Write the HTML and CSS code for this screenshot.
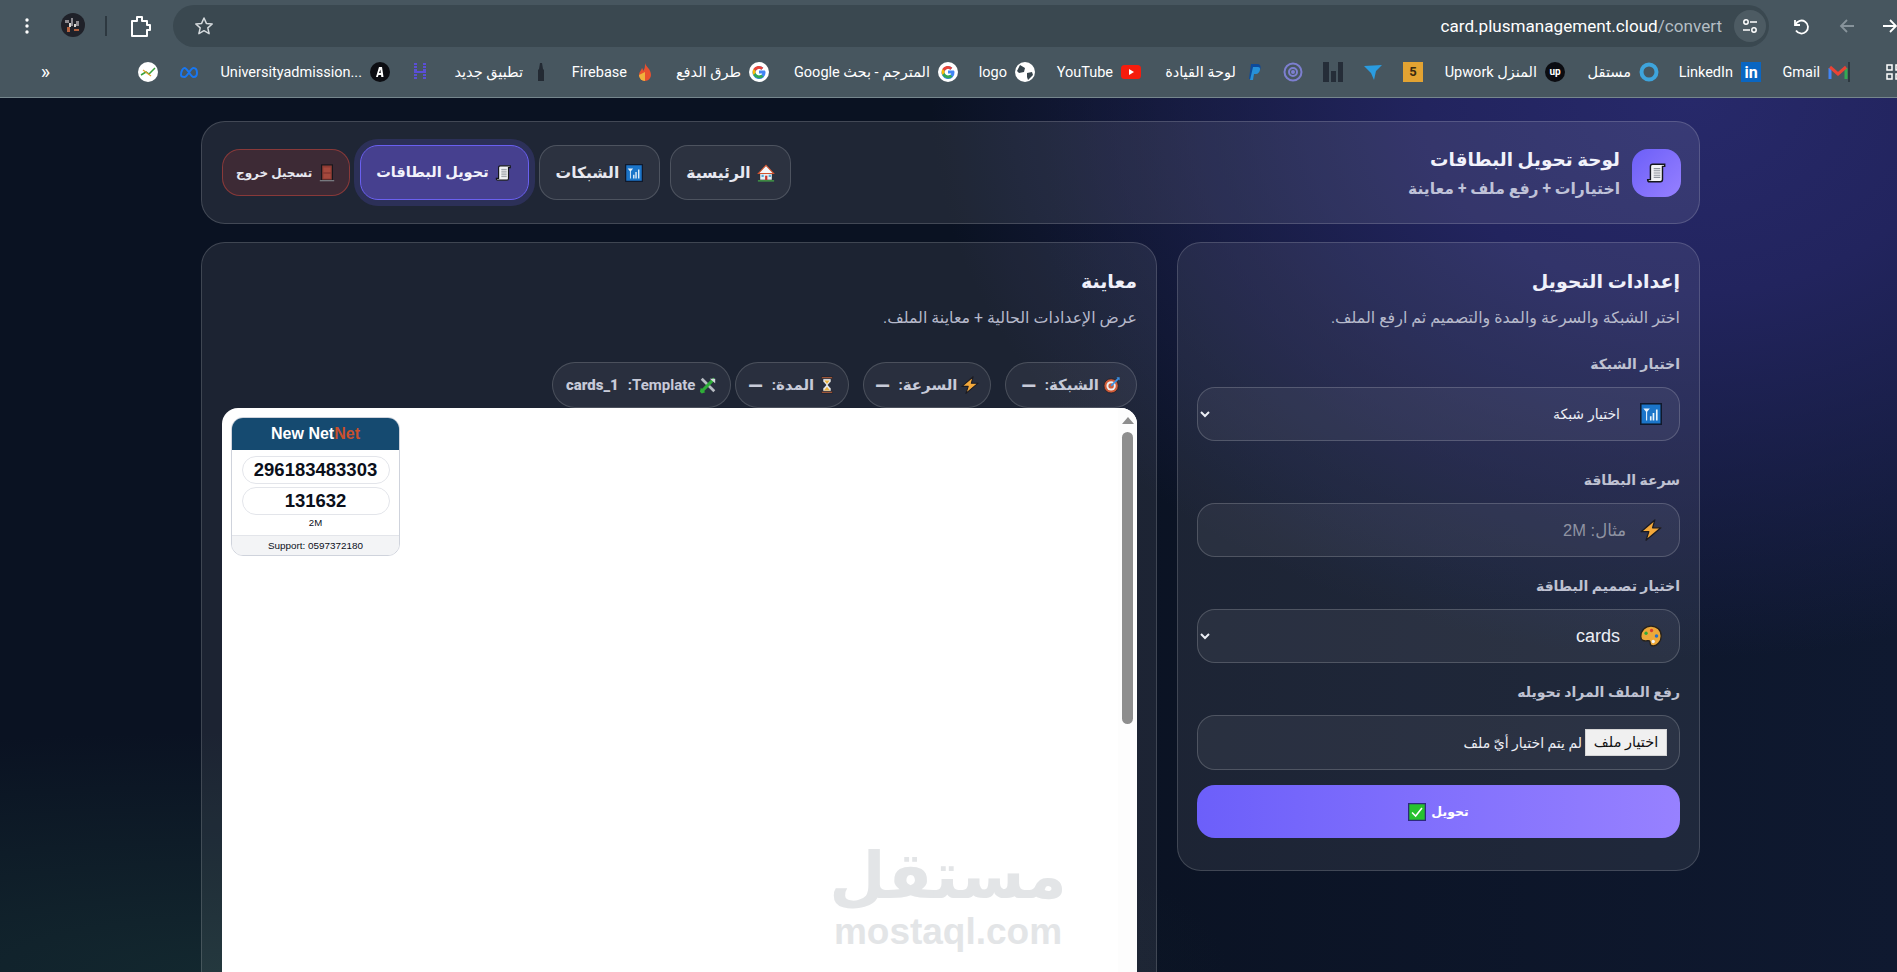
FILE: index.html
```html
<!DOCTYPE html>
<html lang="ar">
<head>
    <meta charset="UTF-8">
    <meta name="viewport" content="width=device-width, initial-scale=1.0">
    <title>لوحة تحويل البطاقات</title>
    <link rel="stylesheet" href="styles.css">
</head>
<body>
    <!-- shared emoji drawings -->
    <svg class="sprites" aria-hidden="true">
        <symbol id="e-scroll" viewBox="0 0 20 20">
            <path d="M6 2h11v2h-2v12q0 2-2 2H3q-1.500 0-1.500-2H4V4q0-2 2-2z" fill="#f2f3f5" stroke="#15171c" stroke-width="1.300"/>
            <path d="M7 6h6M7 8h6M7 10h6M7 12h6M7 14h6" stroke="#8f949c" stroke-width="1"/>
        </symbol>
        <symbol id="e-signal" viewBox="0 0 20 20">
            <rect x=".7" y=".7" width="18.600" height="18.600" fill="#1b75c9" stroke="#10192c" stroke-width="1.400"/>
            <path d="M3 5h6L6.500 8v8h-1V8z" fill="#e9f3fb"/>
            <path d="M9 12h1.500v4H9zM11.500 9H13v7h-1.500zM14.500 6H16v10h-1.500z" fill="#e9f3fb"/>
        </symbol>
        <symbol id="e-house" viewBox="0 0 20 20">
            <path d="M3 10h14v8H3z" fill="#e8eef2" stroke="#1b1d22"/>
            <path d="M10 1.500 1.500 10.500h17z" fill="#f4f6f8" stroke="#d2522c" stroke-width="1.200"/>
            <path d="M9 13h2.500v5H9z" fill="#c9352b"/>
            <path d="M5 12h2.500v2.500H5zM13 12h2.500v2.500H13z" fill="#57a9dc"/>
            <path d="M1 18h18v1.500H1z" fill="#43a047"/>
        </symbol>
        <symbol id="e-door" viewBox="0 0 20 20">
            <rect x="4" y="1" width="12" height="17" fill="#8e3b33" stroke="#17181d" stroke-width="1.300"/>
            <path d="M6 4h8v5H6zM6 11h8v5H6z" fill="#a5493d"/>
            <path d="M2 18.500h16" stroke="#77797f" stroke-width="1.500"/>
        </symbol>
        <symbol id="e-bolt" viewBox="0 0 20 20">
            <path d="M13.500.8 1 11.500h7L5.500 19.300 19 8h-7.500z" fill="#f4a93b" stroke="#1b1b22" stroke-width="1.200" stroke-linejoin="round"/>
        </symbol>
        <symbol id="e-palette" viewBox="0 0 20 20">
            <path d="M10 1c5.500 0 9.300 3.600 9.300 9 0 5-3.700 9-7.300 9-2 0-2.800-1.200-2.800-2.700 0-2-1.200-2.300-2.700-2-2.500.5-5.800 0-5.800-3.800C.7 4.800 4.800 1 10 1z" fill="#eda839" stroke="#26211b" stroke-width="1.200"/>
            <circle cx="5.500" cy="7.500" r="1.500" fill="#2faa3c"/>
            <circle cx="10.500" cy="5" r="1.500" fill="#d8402f"/>
            <circle cx="15" cy="10" r="1.600" fill="#2770c9"/>
            <circle cx="12" cy="15" r="1.500" fill="#f4f4f4"/>
        </symbol>
        <symbol id="e-check" viewBox="0 0 20 20">
            <rect x=".7" y=".7" width="18.600" height="18.600" fill="#27c22f" stroke="#2c2a7c" stroke-width="1.400"/>
            <path d="M4.500 10.500 8.500 14.500 15.500 5.500" fill="none" stroke="#fff" stroke-width="1.700"/>
        </symbol>
        <symbol id="e-target" viewBox="0 0 20 20">
            <circle cx="9" cy="11" r="8" fill="#cf5a37" stroke="#20222d"/>
            <circle cx="9" cy="11" r="5.200" fill="#eceff2"/>
            <circle cx="9" cy="11" r="3" fill="#cf5a37"/>
            <path d="M9 11 17 3" stroke="#3b8fe0" stroke-width="2"/>
            <path d="M15 1.500h3.500V5z" fill="#3b8fe0"/>
        </symbol>
        <symbol id="e-hourglass" viewBox="0 0 20 20">
            <path d="M4 1h12v2H4zM4 17h12v2H4z" fill="#c9683f" stroke="#1b1d24" stroke-width=".7"/>
            <path d="M5.500 3h9v3L11 10l3.500 4v3h-9v-3L9 10 5.500 6z" fill="#eceef2" stroke="#1b1d24" stroke-width=".7"/>
            <path d="M7 5h6l-3 4zM6.500 16 10 12l3.500 4z" fill="#eab23e"/>
        </symbol>
        <symbol id="e-tools" viewBox="0 0 20 20">
            <path d="M3 3 17 17" stroke="#b7bcc3" stroke-width="3"/>
            <path d="M17 3 3 17" stroke="#2fae38" stroke-width="3.400"/>
            <path d="M12 3h6v5z" fill="#d4d8dd"/>
            <path d="M2 13l5 5-4 1.500-2-2z" fill="#2fae38"/>
        </symbol>
        <symbol id="i-g" viewBox="0 0 20 20">
            <circle cx="10" cy="10" r="10" fill="#fff"/>
            <path d="M15.800 8.500H10v3h3.300a3.500 3.500 0 1 1-1-3.800l2-2A6.500 6.500 0 1 0 16.500 10q0-.8-.7-1.500z" fill="#4285f4"/>
            <path d="M4.300 7a6.500 6.500 0 0 1 10-1.300l-2 2A3.500 3.500 0 0 0 6.700 9z" fill="#ea4335"/>
            <path d="M3.600 10q0-1.600.7-3l2.400 2q-.3 1 0 2l-2.400 2q-.7-1.400-.7-3z" fill="#fbbc05"/>
            <path d="M4.300 13l2.400-2a3.500 3.500 0 0 0 5.600 1.700l2.300 1.800A6.500 6.500 0 0 1 4.300 13z" fill="#34a853"/>
        </symbol>
    </svg>

    <!-- browser toolbar -->
    <header class="browser">
        <div class="toolbar">
            <svg class="tb-dots" width="4" height="16" viewBox="0 0 4 16"><circle cx="2" cy="2" r="1.700"/><circle cx="2" cy="8" r="1.700"/><circle cx="2" cy="14" r="1.700"/></svg>
            <svg class="tb-avatar" width="24" height="24" viewBox="0 0 24 24"><circle cx="12" cy="12" r="12" fill="#1f2129"/><path d="M4 7h4v3H4zM10 5h2v8h-2zM15 8h3v5h-3z" fill="#8c8a90"/><path d="M6 14h3v5H6zM13 16h5v2h-5z" fill="#b5623f"/><path d="M8 10h2v4H8zM13 11h2v3h-2z" fill="#d8d6d2"/></svg>
            <span class="tb-divider"></span>
            <svg class="tb-ext" width="22" height="24" viewBox="0 0 22 24" fill="none" stroke="#fff" stroke-width="2"><path d="M2 7h5V3h5v4h5v4h3v5h-3v6H2z" stroke-linejoin="round"/></svg>
            <div class="omnibox">
                <svg class="star" width="20" height="20" viewBox="0 0 20 20" fill="none" stroke="#d5dadd" stroke-width="1.500"><path d="M10 2l2.400 5.400 5.800.6-4.400 3.900 1.300 5.800L10 14.700l-5.100 3 1.300-5.800L1.800 8l5.800-.6z" stroke-linejoin="round"/></svg>
                <span class="url">card.plusmanagement.cloud<span class="url-path">/convert</span></span>
                <span class="site-btn">
                    <svg width="16" height="16" viewBox="0 0 16 16" fill="none" stroke="#fff" stroke-width="1.500"><path d="M8 4h7M1 12h7"/><circle cx="4" cy="4" r="2.200"/><circle cx="12" cy="12" r="2.200"/></svg>
                </span>
            </div>
            <svg class="tb-reload" width="20" height="20" viewBox="0 0 20 20" fill="none" stroke="#fff" stroke-width="1.800"><path d="M4 4v5h5"/><path d="M4.500 8.500A6.500 6.500 0 1 1 5 14.500"/></svg>
            <svg class="tb-back" width="18" height="18" viewBox="0 0 18 18" fill="none" stroke="#87939b" stroke-width="1.800"><path d="M16 9H3M9 3 3 9l6 6"/></svg>
            <svg class="tb-forward" width="18" height="18" viewBox="0 0 18 18" fill="none" stroke="#fff" stroke-width="1.800"><path d="M2 9h13M9 3l6 6-6 6"/></svg>
        </div>
        <nav class="bookmarks">
            <span class="bm bm-more">»</span>
            <span class="bm"><svg class="fav" viewBox="0 0 20 20"><circle cx="10" cy="10" r="10" fill="#fff"/><path d="M3 13 8 10l3 2 6-6" fill="none" stroke="#3aa23a" stroke-width="1.500"/><path d="M5 8l8 6" stroke="#e0a12c" stroke-width="1.200"/></svg></span>
            <span class="bm"><svg class="fav" viewBox="0 0 20 20" fill="none" stroke="#1877f2" stroke-width="2"><path d="M2 13c0-4 2-7 3.500-7 3 0 6 9 9 9C17 15 18 13 18 11c0-3-1.500-5-3.500-5-3 0-6 9-9 9C3 15 2 14 2 13z"/></svg></span>
            <span class="bm">Universityadmission...<svg class="fav" viewBox="0 0 20 20"><circle cx="10" cy="10" r="10" fill="#0c0d12"/><path d="M6 15 9 5h3l1.500 10h-2.200l-.2-2H8.500l-.6 2zM9 11h1.800l-.4-3.500z" fill="#fff"/></svg></span>
            <span class="bm"><svg class="fav" viewBox="0 0 20 20" fill="#5a4fd6"><path d="M4 1h3v2H4zM13 1h3v2h-3zM4 4h3v2H4zM13 4h3v2h-3zM4 7h3v2H4zM13 7h3v2h-3zM4 9h12v2H4zM4 12h3v2H4zM13 12h3v2h-3zM4 15h3v2H4zM13 15h3v2h-3z"/></svg></span>
            <span class="bm">تطبيق جديد<svg class="fav" viewBox="0 0 20 20" fill="#232a33"><path d="M9 1h2l1 6 1 1v11H7V8l1-1z"/></svg></span>
            <span class="bm">Firebase<svg class="fav" viewBox="0 0 20 20"><path d="M10 1c1 4 6 6 6 12a6 6 0 0 1-12 0c0-3 2-4 3-7 1 1 1 2 1 3 2-2 2-5 2-8z" fill="#e8502f"/><path d="M4 13a6 6 0 0 0 6 6V10z" fill="#f0b13c"/></svg></span>
            <span class="bm">طرق الدفع<svg class="fav"><use href="#i-g"/></svg></span>
            <span class="bm"><span dir="rtl">المترجم - بحث Google</span><svg class="fav"><use href="#i-g"/></svg></span>
            <span class="bm">logo<svg class="fav" viewBox="0 0 20 20"><circle cx="10" cy="10" r="10" fill="#fff"/><path d="M5 3l5 3-1 4-5 1-2-2zM12 11l5-1 1 3-5 5-1-3z" fill="#37444c"/></svg></span>
            <span class="bm">YouTube<svg class="fav" viewBox="0 0 20 20"><rect y="3" width="20" height="14" rx="3.500" fill="#f61c0d"/><path d="M8 7l5 3-5 3z" fill="#fff"/></svg></span>
            <span class="bm">لوحة القيادة<svg class="fav" viewBox="0 0 20 20"><path d="M7 2h6c3 0 4 2 3.500 4.500S14 10 12 10h-2l-1 7H5z" fill="#0d4a9a"/><path d="M9 5h5c1.500 0 2.500 1 2 3s-2 4-4 4h-2l-1 6H6z" fill="#2790d8"/></svg></span>
            <span class="bm"><svg class="fav" viewBox="0 0 20 20" fill="none" stroke="#7d7fd0" stroke-width="2"><circle cx="10" cy="10" r="8.500"/><circle cx="10" cy="10" r="4"/><circle cx="10" cy="10" r="1" fill="#7d7fd0"/></svg></span>
            <span class="bm"><svg class="fav" viewBox="0 0 20 20" fill="#252d38"><path d="M0 0h6v20H0zM8 9h5v11H8zM15 0h5v20h-5z"/></svg></span>
            <span class="bm"><svg class="fav" viewBox="0 0 20 20" fill="#2a9ce0"><path d="M1 4l18-1-6 6-2 9-3-7z"/></svg></span>
            <span class="bm"><span class="fav fav-five">5</span></span>
            <span class="bm">Upwork المنزل<svg class="fav" viewBox="0 0 20 20"><circle cx="10" cy="10" r="10" fill="#0b0c11"/><text x="10" y="13" text-anchor="middle" class="fav-up">up</text></svg></span>
            <span class="bm">مستقل<svg class="fav" viewBox="0 0 20 20" fill="none" stroke="#3ea4dc" stroke-width="4"><circle cx="10" cy="10" r="7.500"/></svg></span>
            <span class="bm">LinkedIn<svg class="fav" viewBox="0 0 20 20"><rect width="20" height="20" fill="#0a66c2"/><text x="10" y="15.500" text-anchor="middle" class="fav-in">in</text></svg></span>
            <span class="bm">Gmail<svg class="fav" viewBox="0 0 20 20" fill="none" stroke-width="3"><path d="M2 17V6" stroke="#4285f4"/><path d="M18 17V6" stroke="#34a853"/><path d="M2 5l8 7 8-7" stroke="#ea4335"/></svg></span>
            <span class="bm bm-divider"></span>
            <span class="bm bm-grid"><svg width="16" height="16" viewBox="0 0 16 16" fill="none" stroke="#fff" stroke-width="1.500"><rect x="1" y="1" width="5" height="5"/><rect x="1" y="10" width="5" height="5"/><rect x="10" y="1" width="5" height="5"/><rect x="10" y="10" width="5" height="5"/></svg></span>
        </nav>
    </header>

    <main class="page" dir="rtl">
        <div class="topbar">
            <div class="brand">
                <div class="brand-icon"><svg class="emoji-lg"><use href="#e-scroll"/></svg></div>
                <div>
                    <h1>لوحة تحويل البطاقات</h1>
                    <p>اختيارات + رفع ملف + معاينة</p>
                </div>
            </div>
            <nav class="nav">
                <a class="nav-btn"><svg class="emoji"><use href="#e-house"/></svg>الرئيسية</a>
                <a class="nav-btn nav-net"><svg class="emoji"><use href="#e-signal"/></svg>الشبكات</a>
                <a class="nav-btn active"><svg class="emoji"><use href="#e-scroll"/></svg>تحويل البطاقات</a>
                <a class="nav-btn logout"><svg class="emoji"><use href="#e-door"/></svg>تسجيل خروج</a>
            </nav>
        </div>

        <div class="columns">
            <section class="panel">
                <h2>إعدادات التحويل</h2>
                <p class="sub">اختر الشبكة والسرعة والمدة والتصميم ثم ارفع الملف.</p>

                <div class="group group-first">
                    <label>اختيار الشبكة</label>
                    <div class="field">
                        <svg class="field-icon"><use href="#e-signal"/></svg>
                        <select class="control select-ar"><option>اختيار شبكة</option></select>
                    </div>
                </div>
                <div class="group">
                    <label>سرعة البطاقة</label>
                    <div class="field">
                        <svg class="field-icon"><use href="#e-bolt"/></svg>
                        <input class="control" type="text" placeholder="مثال: 2M">
                    </div>
                </div>
                <div class="group">
                    <label>اختيار تصميم البطاقة</label>
                    <div class="field">
                        <svg class="field-icon"><use href="#e-palette"/></svg>
                        <select class="control control-lat"><option>cards</option></select>
                    </div>
                </div>
                <div class="group group-last">
                    <label>رفع الملف المراد تحويله</label>
                    <div class="file-box">
                        <button class="file-btn" type="button">اختيار ملف</button>
                        <span>لم يتم اختيار أيّ ملف</span>
                    </div>
                </div>
                <button class="submit" type="button">تحويل<svg class="emoji"><use href="#e-check"/></svg></button>
            </section>

            <section class="panel panel-preview">
                <h2>معاينة</h2>
                <p class="sub">عرض الإعدادات الحالية + معاينة الملف.</p>
                <div class="chips">
                    <span class="chip chip-net"><svg class="emoji"><use href="#e-target"/></svg>الشبكة: <b class="dash">—</b></span>
                    <span class="chip chip-speed"><svg class="emoji"><use href="#e-bolt"/></svg>السرعة: <b class="dash">—</b></span>
                    <span class="chip chip-time"><svg class="emoji"><use href="#e-hourglass"/></svg>المدة: <b class="dash">—</b></span>
                    <span class="chip chip-template"><svg class="emoji"><use href="#e-tools"/></svg><span>Template:</span><b>cards_1</b></span>
                </div>
                <div class="preview" dir="ltr">
                    <div class="preview-body">
                        <div class="card">
                            <div class="card-head">New Net<span>Net</span></div>
                            <div class="card-pill">296183483303</div>
                            <div class="card-pill">131632</div>
                            <div class="card-speed">2M</div>
                            <div class="card-foot">Support: 0597372180</div>
                        </div>
                    </div>
                    <div class="scrollbar">
                        <span class="scroll-up"></span>
                        <span class="scroll-thumb"></span>
                    </div>
                </div>
            </section>
        </div>

        <div class="watermark" dir="rtl">
            <span class="wm-ar">مستقل</span>
            <span class="wm-en">mostaql.com</span>
        </div>
    </main>
</body>
</html>
```

FILE: styles.css
```css
* {
    margin: 0;
    padding: 0;
    box-sizing: border-box;
}

html, body {
    height: 972px;
    overflow: hidden;
}

body {
    font-family: Roboto, "DejaVu Sans", sans-serif;
    background: #0a1222;
}

.sprites {
    position: absolute;
    width: 0;
    height: 0;
}

/* browser toolbar */
.browser {
    height: 98px;
    background: #47565f;
    border-bottom: 1px solid #76868d;
    color: #fff;
    overflow: hidden;
}

.toolbar {
    height: 52px;
    padding-top: 5px;
    display: flex;
    align-items: flex-start;
}

.toolbar > * {
    flex-shrink: 0;
}

.tb-dots {
    margin: 13px 0 0 25px;
    fill: #fff;
}

.tb-avatar {
    margin: 8px 0 0 32px;
}

.tb-divider {
    width: 2px;
    height: 20px;
    margin: 11px 0 0 20px;
    background: #2d3840;
}

.tb-ext {
    margin: 9px 0 0 23px;
}

.omnibox {
    width: 1596px;
    height: 42px;
    margin-left: 21px;
    padding: 0 3px 0 21px;
    border-radius: 21px;
    background: #3a4850;
    display: flex;
    align-items: center;
}

.url {
    margin-left: auto;
    font-size: 17.100px;
}

.url-path {
    color: #b4bec4;
}

.site-btn {
    width: 32px;
    height: 32px;
    margin-left: 12px;
    border-radius: 50%;
    background: #4d5b63;
    display: flex;
    align-items: center;
    justify-content: center;
}

.tb-reload {
    margin: 11px 0 0 22px;
}

.tb-back {
    margin: 12px 0 0 27px;
}

.tb-forward {
    margin: 12px 0 0 25px;
}

.bookmarks {
    height: 45px;
    padding-bottom: 5px;
    display: grid;
    grid-template-columns: 50px 108px 41px 191px 40px 121px 104px 114px 189px 77px 106px 123px 39px 40px 40px 40px 142px 94px 102px 87px 9px 42px;
    align-items: center;
    font-size: 14.5px;
    white-space: nowrap;
}

.bm {
    justify-self: end;
    display: flex;
    align-items: center;
    gap: 8px;
}

.bm-more {
    font-size: 20px;
}

.bm-divider {
    width: 2px;
    height: 20px;
    background: #2d3840;
    justify-self: start;
}

.bm-grid {
    justify-self: start;
    margin-left: 29px;
}

.fav {
    width: 20px;
    height: 20px;
    flex-shrink: 0;
}

.fav-five {
    background: #e3a332;
    color: #3a2a10;
    font-size: 13px;
    font-weight: 700;
    text-align: center;
    line-height: 20px;
}

.fav-up {
    fill: #fff;
    font-size: 10px;
    font-weight: 700;
}

.fav-in {
    fill: #fff;
    font-size: 16px;
    font-weight: 700;
}

/* page */
.page {
    position: relative;
    height: 874px;
    padding: 23px 197px 0 201px;
    overflow: hidden;
    background:
        radial-gradient(760px 560px at 1690px 0, #27296a 0%, #22245e 35%, rgba(28, 30, 80, 0) 100%),
        radial-gradient(1000px 240px at 230px 100%, #13282f 0%, rgba(19, 40, 47, 0) 100%),
        linear-gradient(90deg, #0a1222 0%, #0a1222 55%, #0f1930 100%);
}

.topbar {
    height: 103px;
    padding: 0 18px 0 20px;
    display: flex;
    align-items: center;
    justify-content: space-between;
    border: 1px solid rgba(255, 255, 255, 0.16);
    border-radius: 24px;
    background: rgba(255, 255, 255, 0.085);
}

.brand {
    display: flex;
    align-items: center;
    gap: 12px;
}

.brand-icon {
    width: 49px;
    height: 48px;
    border-radius: 16px;
    background: linear-gradient(135deg, #6c5ff8, #9680ff);
    display: flex;
    align-items: center;
    justify-content: center;
}

.emoji-lg {
    width: 22px;
    height: 22px;
}

.brand h1 {
    font-size: 18.400px;
    line-height: 28px;
    font-weight: 700;
    color: #f1f2fb;
}

.brand p {
    margin-top: 5px;
    font-size: 15.600px;
    line-height: 20px;
    font-weight: 700;
    color: #bfc2d8;
}

.nav {
    display: flex;
    align-items: center;
    gap: 10px;
}

.nav-btn {
    height: 55px;
    padding: 0 15px;
    display: flex;
    align-items: center;
    gap: 6px;
    border: 1px solid rgba(255, 255, 255, 0.16);
    border-radius: 18px;
    background: rgba(255, 255, 255, 0.06);
    color: #e7e8f0;
    font-size: 15.500px;
    font-weight: 700;
}

.nav-btn.nav-net {
    padding: 0 16px;
}

.nav-btn.active {
    border-color: #6a60f0;
    background: #46408f;
    box-shadow: 0 0 0 6px rgba(108, 95, 248, 0.18);
    color: #f2f2fb;
    font-size: 14.500px;
}

.nav-btn.logout {
    height: 47px;
    padding: 0 13px;
    font-size: 12px;
    border-color: rgba(200, 70, 60, 0.55);
    background: #3d2a35;
}

.emoji {
    width: 18px;
    height: 18px;
    flex-shrink: 0;
}

.columns {
    margin-top: 18px;
    display: grid;
    grid-template-columns: 523px 1fr;
    gap: 20px;
    align-items: start;
}

.panel {
    padding: 25px 19px 32px;
    border: 1px solid rgba(255, 255, 255, 0.16);
    border-radius: 24px;
    background: rgba(255, 255, 255, 0.075);
}

.panel-preview {
    height: 900px;
}

.panel h2 {
    font-size: 19px;
    line-height: 28px;
    font-weight: 700;
    color: #eff0fa;
}

.sub {
    margin-top: 10px;
    font-size: 15.900px;
    line-height: 24px;
    color: #b6b9cb;
}

.group {
    margin-bottom: 19px;
}

.group-first {
    margin-top: 24px;
    margin-bottom: 29px;
}

.group-last {
    margin-bottom: 15px;
}

.group label {
    display: block;
    margin-bottom: 13px;
    font-size: 14px;
    line-height: 20px;
    font-weight: 700;
    color: #bfc2d2;
}

.field {
    position: relative;
}

.field-icon {
    position: absolute;
    top: 16px;
    right: 18px;
    width: 22px;
    height: 22px;
    pointer-events: none;
}

.control {
    width: 100%;
    height: 54px;
    padding: 0 53px 0 4px;
    border: 1px solid rgba(255, 255, 255, 0.18);
    border-radius: 18px;
    background-color: rgba(255, 255, 255, 0.055);
    color: #eceef5;
    font-family: "Liberation Sans", "DejaVu Sans", sans-serif;
    font-size: 16.500px;
    outline: none;
}

.select-ar {
    padding-right: 55px;
    font-size: 14px;
}

.control-lat {
    padding-right: 55px;
    font-size: 18px;
}

.control::placeholder {
    color: #8f93a2;
}

.file-box {
    height: 55px;
    padding: 0 12px;
    display: flex;
    align-items: center;
    border: 1px solid rgba(255, 255, 255, 0.18);
    border-radius: 18px;
    background: rgba(255, 255, 255, 0.055);
    color: #eceef5;
    font-size: 14px;
}

.file-btn {
    width: 82px;
    height: 27px;
    margin-left: 3px;
    border: 1px solid #d5d5d5;
    background: #f0f0f0;
    color: #111;
    font-family: inherit;
    font-size: 14.500px;
}

.submit {
    width: 100%;
    height: 53px;
    display: flex;
    align-items: center;
    justify-content: center;
    gap: 5px;
    border: 0;
    border-radius: 18px;
    background: linear-gradient(90deg, #6c5ffa, #9781ff);
    color: #fff;
    font-family: inherit;
    font-size: 12.500px;
    font-weight: 700;
}

.chips {
    margin-top: 32px;
    display: flex;
    gap: 14px;
}

.chip {
    height: 46px;
    padding: 0 13px;
    display: flex;
    align-items: center;
    gap: 4px;
    border: 1px solid rgba(255, 255, 255, 0.16);
    border-radius: 23px;
    background: rgba(255, 255, 255, 0.06);
    color: #c7cad8;
    font-size: 15px;
    font-weight: 700;
    white-space: nowrap;
}

.chip b {
    margin-right: 5px;
}

.chip .dash {
    font-size: 19px;
}

.chip-net {
    padding: 0 15px;
}

.chip-speed {
    padding: 0 11px;
}

.chip-time {
    padding: 0 12px;
}

.chip-template {
    margin-right: -10px;
}

.preview {
    height: 600px;
    margin-left: 1px;
    display: flex;
    border-radius: 16px 16px 0 0;
    background: #fff;
    overflow: hidden;
}

.preview-body {
    flex: 1;
    padding: 9px;
}

.scrollbar {
    width: 19px;
    padding-top: 9px;
    display: flex;
    flex-direction: column;
    align-items: center;
    gap: 8px;
    background: #fdfdfd;
}

.scroll-up {
    width: 0;
    height: 0;
    border-left: 6px solid transparent;
    border-right: 6px solid transparent;
    border-bottom: 7px solid #8e8e8e;
}

.scroll-thumb {
    width: 11px;
    height: 292px;
    border-radius: 6px;
    background: #8e8e8e;
}

.card {
    width: 169px;
    height: 139px;
    border: 1px solid #cfd3dc;
    border-radius: 12px;
    overflow: hidden;
    background: #fff;
    font-family: "Liberation Sans", sans-serif;
    color: #0b0f1a;
    text-align: center;
}

.card-head {
    height: 32px;
    margin-bottom: 6px;
    background: #154a70;
    color: #fff;
    font-size: 16px;
    font-weight: 700;
    line-height: 31px;
}

.card-head span {
    color: #c9502c;
}

.card-pill {
    width: 148px;
    height: 28px;
    margin: 0 auto 3px;
    border: 1px solid #e3e5ea;
    border-radius: 14px;
    font-size: 18.500px;
    font-weight: 700;
    line-height: 26px;
}

.card-speed {
    height: 17px;
    font-size: 9.600px;
    line-height: 10px;
}

.card-foot {
    height: 20px;
    border-top: 1px solid #e3e5ea;
    background: #f3f4f6;
    font-size: 9.900px;
    line-height: 19px;
}

.watermark {
    position: absolute;
    left: 834px;
    top: 738px;
    width: 228px;
    display: flex;
    flex-direction: column;
    align-items: center;
    color: #e3e5e7;
    font-weight: 700;
}

.wm-ar {
    font-size: 65px;
    line-height: 80px;
    white-space: nowrap;
}

.wm-en {
    margin-top: 4px;
    font-family: "Liberation Sans", sans-serif;
    font-size: 37px;
    line-height: 24px;
}
```
